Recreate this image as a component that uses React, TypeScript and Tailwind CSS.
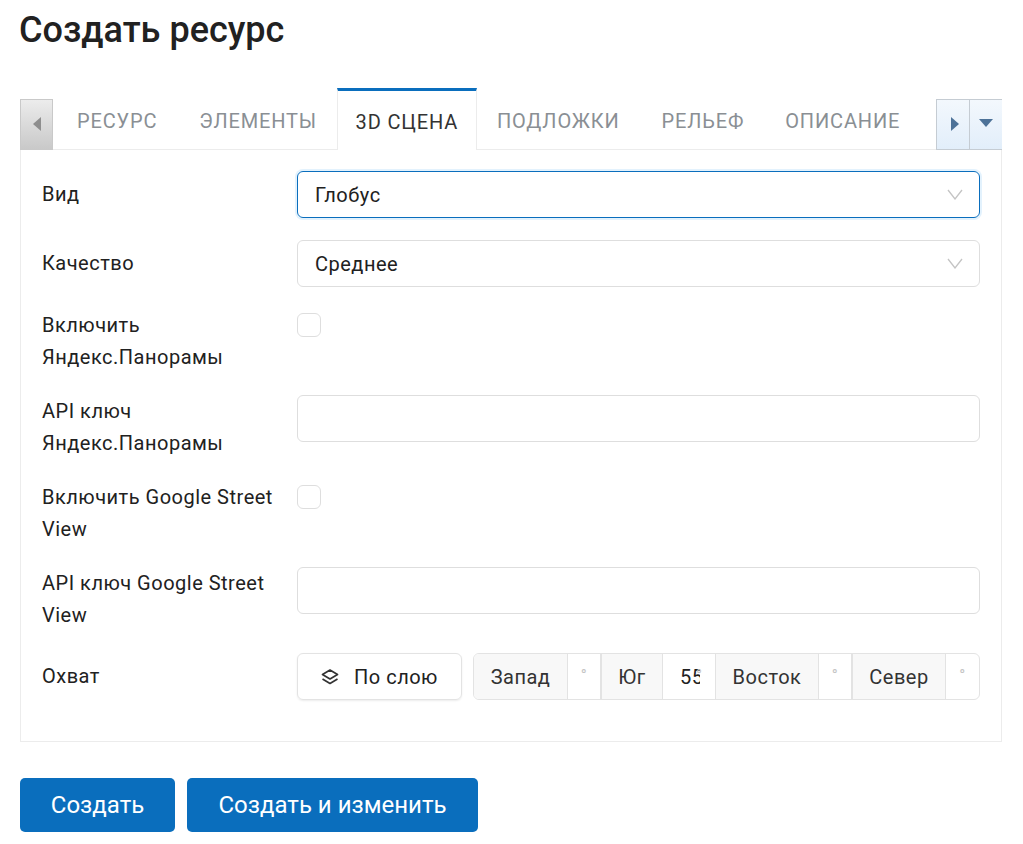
const Chevron = () => (
  <svg className="w-[16px] h-[11px] text-[#c4c4c4]" viewBox="0 0 16 11" fill="none" stroke="currentColor" strokeWidth="1.3">
    <path d="M1 1l7 9 7-9" />
  </svg>
);

const LayersIcon = () => (
  <svg className="w-[18px] h-[16px] text-[#333]" viewBox="0 0 18 16" fill="none" stroke="currentColor" strokeWidth="1.7" strokeLinejoin="round">
    <path d="M9 1l7.5 4.5L9 10 1.5 5.5z" />
    <path d="M1.5 10L9 14.5 16.5 10" />
  </svg>
);

function Row({ label, top = false, children }: { label: string; top?: boolean; children: React.ReactNode }) {
  return (
    <div className="flex mb-[22px] last:mb-0">
      <div className={`w-[255px] pr-[20px] shrink-0 ${top ? '' : 'pt-[7px]'}`}>{label}</div>
      <div className="flex-1 min-w-0">{children}</div>
    </div>
  );
}

function Addon({ text, className = '' }: { text: string; className?: string }) {
  return (
    <div className={`bg-[#f8f8f8] border-r border-[#e3e3e3] flex items-center justify-center text-[#333] ${className}`}>
      {text}
    </div>
  );
}

function Degree({ className = '' }: { className?: string }) {
  return (
    <div className={`flex justify-center pt-[14px] text-[16px] leading-[16px] text-[#c4c4c4] ${className}`}>°</div>
  );
}

export default function App() {
  return (
    <div className="min-h-screen bg-white pl-[20px] pr-[21px] font-['Roboto',sans-serif] text-[20px] leading-[32px] text-[#212121] tracking-[0.5px]">
      <h1 className="text-[36px] leading-[40px] font-medium pt-[10px] -ml-[1px] tracking-normal mb-[38px]">Создать ресурс</h1>

      {/* Tabs */}
      <div className="flex items-end h-[62px] tracking-[0.85px] text-[#8a8f94]">
        <div className="w-[33px] h-[51px] border border-[#c9c9c9] bg-gradient-to-b from-[#ececec] to-[#c9c9c9] flex items-center justify-center shrink-0">
          <div className="w-0 h-0 mb-[2px] border-y-[7px] border-y-transparent border-r-[8px] border-r-[#8e8e8e]" />
        </div>
        <div className="flex flex-1 items-end h-full border-b border-[#ececec]">
          <div className="h-[50px] flex items-center pb-[7px] ml-[24px] mr-[42px]">РЕСУРС</div>
          <div className="h-[50px] flex items-center pb-[7px] mr-[20px]">ЭЛЕМЕНТЫ</div>
          <div className="h-[62px] -mb-px w-[140px] border-t-[3px] border-t-[#0a6ebd] border-x border-x-[#ececec] bg-white text-[#333] flex items-center justify-center pt-[2px]">3D СЦЕНА</div>
          <div className="h-[50px] flex items-center pb-[7px] ml-[20px] mr-[42px]">ПОДЛОЖКИ</div>
          <div className="h-[50px] flex items-center pb-[7px] mr-[41px]">РЕЛЬЕФ</div>
          <div className="h-[50px] flex items-center pb-[7px]">ОПИСАНИЕ</div>
        </div>
        <div className="w-[34px] h-[51px] border border-[#c5ccd3] bg-gradient-to-b from-[#f3f8fd] to-[#e2eefa] flex items-center justify-center shrink-0">
          <div className="w-0 h-0 mb-[2px] ml-[3px] border-y-[7px] border-y-transparent border-l-[8px] border-l-[#4d7298]" />
        </div>
        <div className="w-[32px] h-[51px] border-y border-[#c5ccd3] bg-gradient-to-b from-[#f3f8fd] to-[#e2eefa] flex items-center justify-center shrink-0">
          <div className="w-0 h-0 mb-[4px] border-x-[7px] border-x-transparent border-t-[8px] border-t-[#4d7298]" />
        </div>
      </div>

      {/* Panel */}
      <div className="border-x border-b border-[#ececec] pl-[21px] pr-[21px] pt-[21px] pb-[41px] h-[592px]">
        <Row label="Вид">
          <div className="h-[47px] rounded-[6px] border border-[#0a6ebd] shadow-[0_0_0_2px_#e3f2fd] flex items-center justify-between pl-[17px] pr-[16px]">
            <span>Глобус</span>
            <Chevron />
          </div>
        </Row>
        <Row label="Качество">
          <div className="h-[47px] rounded-[6px] border border-[#dedede] flex items-center justify-between pl-[17px] pr-[16px]">
            <span>Среднее</span>
            <Chevron />
          </div>
        </Row>
        <Row label="Включить Яндекс.Панорамы" top>
          <div className="w-[24px] h-[24px] mt-[4px] rounded-[6px] border border-[#dedede]" />
        </Row>
        <Row label="API ключ Яндекс.Панорамы" top>
          <div className="h-[47px] rounded-[6px] border border-[#dedede]" />
        </Row>
        <Row label="Включить Google Street View" top>
          <div className="w-[24px] h-[24px] mt-[4px] rounded-[6px] border border-[#dedede]" />
        </Row>
        <Row label="API ключ Google Street View" top>
          <div className="h-[47px] rounded-[6px] border border-[#dedede]" />
        </Row>
        <Row label="Охват">
          <div className="flex gap-[11px]">
            <div className="w-[165px] h-[47px] rounded-[6px] border border-[#e3e3e3] shadow-[0_1px_2px_rgba(0,0,0,0.08)] flex items-center justify-center gap-[15px] shrink-0">
              <LayersIcon />
              <span>По слою</span>
            </div>
            <div className="flex-1 h-[47px] rounded-[6px] border border-[#e3e3e3] flex overflow-hidden">
              <Addon text="Запад" className="w-[94px]" />
              <Degree className="w-[34px] border-r-2 border-[#e3e3e3]" />
              <Addon text="Юг" className="w-[61px]" />
              <div className="w-[53px] border-r border-[#e3e3e3] relative flex items-center pl-[17px]">
                <span className="w-[20px] overflow-hidden">55</span>
                <span className="absolute left-[33px] top-[14px] text-[16px] leading-[16px] text-[#c4c4c4]">°</span>
              </div>
              <Addon text="Восток" className="w-[103px]" />
              <Degree className="w-[34px] border-r-2 border-[#e3e3e3]" />
              <Addon text="Север" className="w-[93px]" />
              <Degree className="flex-1" />
            </div>
          </div>
        </Row>
      </div>

      {/* Actions */}
      <div className="flex gap-[12px] mt-[36px] text-white text-[24px] tracking-normal">
        <button className="w-[155px] h-[54px] rounded-[5px] bg-[#0a6ebd]">Создать</button>
        <button className="w-[291px] h-[54px] rounded-[5px] bg-[#0a6ebd]">Создать и изменить</button>
      </div>
    </div>
  );
}
